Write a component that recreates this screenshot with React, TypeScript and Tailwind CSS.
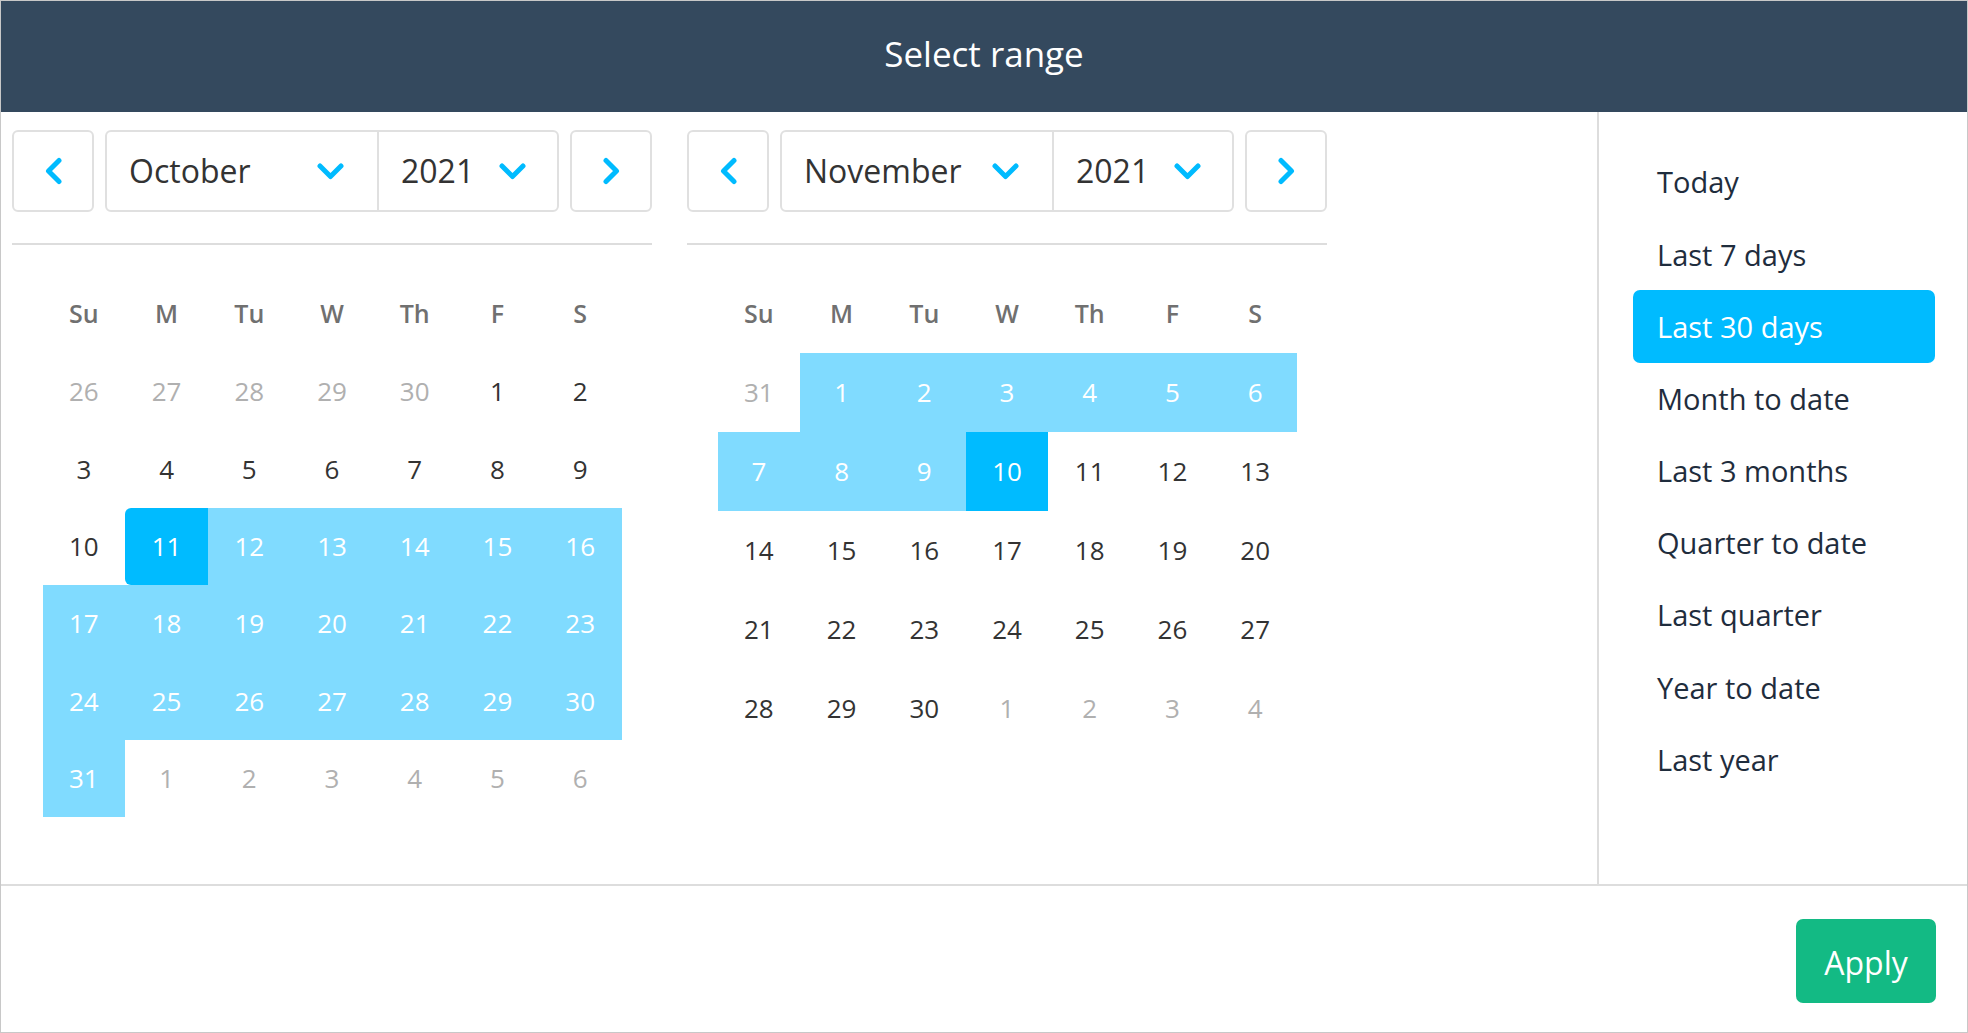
type Day = { n: number; other?: boolean; range?: boolean; start?: boolean; end?: boolean };

const WEEKDAYS = ['Su', 'M', 'Tu', 'W', 'Th', 'F', 'S'];

const PRESETS = [
  'Today',
  'Last 7 days',
  'Last 30 days',
  'Month to date',
  'Last 3 months',
  'Quarter to date',
  'Last quarter',
  'Year to date',
  'Last year',
];

// October 2021: range starts on the 11th
const OCTOBER: Day[] = [
  ...[26, 27, 28, 29, 30].map((n) => ({ n, other: true })),
  ...Array.from({ length: 31 }, (_, i) => {
    const n = i + 1;
    return { n, range: n >= 11, start: n === 11 };
  }),
  ...[1, 2, 3, 4, 5, 6].map((n) => ({ n, other: true })),
];

// November 2021: range ends on the 10th
const NOVEMBER: Day[] = [
  { n: 31, other: true },
  ...Array.from({ length: 30 }, (_, i) => {
    const n = i + 1;
    return { n, range: n <= 10, end: n === 10 };
  }),
  ...[1, 2, 3, 4].map((n) => ({ n, other: true })),
];

function ChevronDown() {
  return (
    <svg width="27" height="17" viewBox="0 0 27 17" fill="none">
      <path d="M3 3 L13.5 13.5 L24 3" stroke="#00bbff" strokeWidth="5" strokeLinecap="round" strokeLinejoin="round" />
    </svg>
  );
}

function Arrow({ dir }: { dir: 'left' | 'right' }) {
  return (
    <svg width="19" height="28" viewBox="0 0 19 28" fill="none">
      <path
        d={dir === 'left' ? 'M15 3.5 L4.5 14 L15 24.5' : 'M4 3.5 L14.5 14 L4 24.5'}
        stroke="#00bbff"
        strokeWidth="5"
        strokeLinecap="round"
        strokeLinejoin="round"
      />
    </svg>
  );
}

function Calendar({ month, days, tall }: { month: string; days: Day[]; tall?: boolean }) {
  return (
    <div className="w-[640px] flex flex-col">
      {/* Nav */}
      <div className="flex h-[82px] gap-[11px]">
        <button className="w-[82px] shrink-0 rounded-[6px] border-2 border-[#e0e0e0] flex items-center justify-center">
          <Arrow dir="left" />
        </button>
        <div className="flex-1 flex rounded-[6px] border-2 border-[#e0e0e0] text-[32px] text-[#333333]">
          <div className="w-[272px] border-r-2 border-[#e0e0e0] flex items-center justify-between pl-[22px] pr-[33px]">
            <span>{month}</span>
            <ChevronDown />
          </div>
          <div className="flex-1 flex items-center justify-between pl-[22px] pr-[31px]">
            <span>2021</span>
            <ChevronDown />
          </div>
        </div>
        <button className="w-[82px] shrink-0 rounded-[6px] border-2 border-[#e0e0e0] flex items-center justify-center">
          <Arrow dir="right" />
        </button>
      </div>

      <div className="mt-[31px] h-[2px] bg-[#dddddd]" />

      <div className="w-[579px] mx-auto mt-[30px] grid grid-cols-7">
        {WEEKDAYS.map((w) => (
          <div key={w} className="h-[78px] flex items-center justify-center text-[25px] font-semibold text-[#707070]">
            {w}
          </div>
        ))}
        {days.map((d, i) => (
          <div
            key={i}
            className={`${tall ? 'h-[79px]' : 'h-[77.4px]'} flex items-center justify-center text-[26px] ${
              d.start || d.end
                ? 'bg-[#00bbff] text-white'
                : d.range
                ? 'bg-[#80dbff] text-white'
                : d.other
                ? 'text-[#b0b0b0]'
                : 'text-[#333333]'
            } ${d.start ? 'rounded-l-[6px]' : ''}`}
          >
            {d.n}
          </div>
        ))}
      </div>
    </div>
  );
}

export default function App() {
  return (
    <div className="w-[1968px] h-[1033px] flex flex-col bg-white border border-[#c8c8c8] font-['Open_Sans',sans-serif] overflow-hidden">
      {/* Header */}
      <div className="h-[111px] shrink-0 bg-[#34495e] flex items-center justify-center pb-[5px] text-white text-[35px]">
        Select range
      </div>

      <div className="h-[774px] shrink-0 flex border-b-2 border-[#dddddd]">
        <div className="flex-1 flex gap-[35px] pl-[11px] pt-[18px]">
          <Calendar month="October" days={OCTOBER} />
          <Calendar month="November" days={NOVEMBER} tall />
        </div>

        {/* Presets */}
        <div className="w-[370px] shrink-0 border-l-2 border-[#dddddd] pt-[34px] pl-[34px] pr-[32px] flex flex-col">
          {PRESETS.map((p) => (
            <div
              key={p}
              className={`h-[72.2px] flex items-center pl-[24px] rounded-[7px] text-[29px] ${
                p === 'Last 30 days' ? 'bg-[#00bbff] text-white' : 'text-[#1f2d3d]'
              }`}
            >
              {p}
            </div>
          ))}
        </div>
      </div>

      {/* Footer */}
      <div className="flex-1 flex justify-end items-start pt-[33px] pr-[31px]">
        <button className="w-[140px] h-[84px] rounded-[7px] bg-[#13ba84] text-white text-[32px] flex items-center justify-center pt-[3px]">
          Apply
        </button>
      </div>
    </div>
  );
}
